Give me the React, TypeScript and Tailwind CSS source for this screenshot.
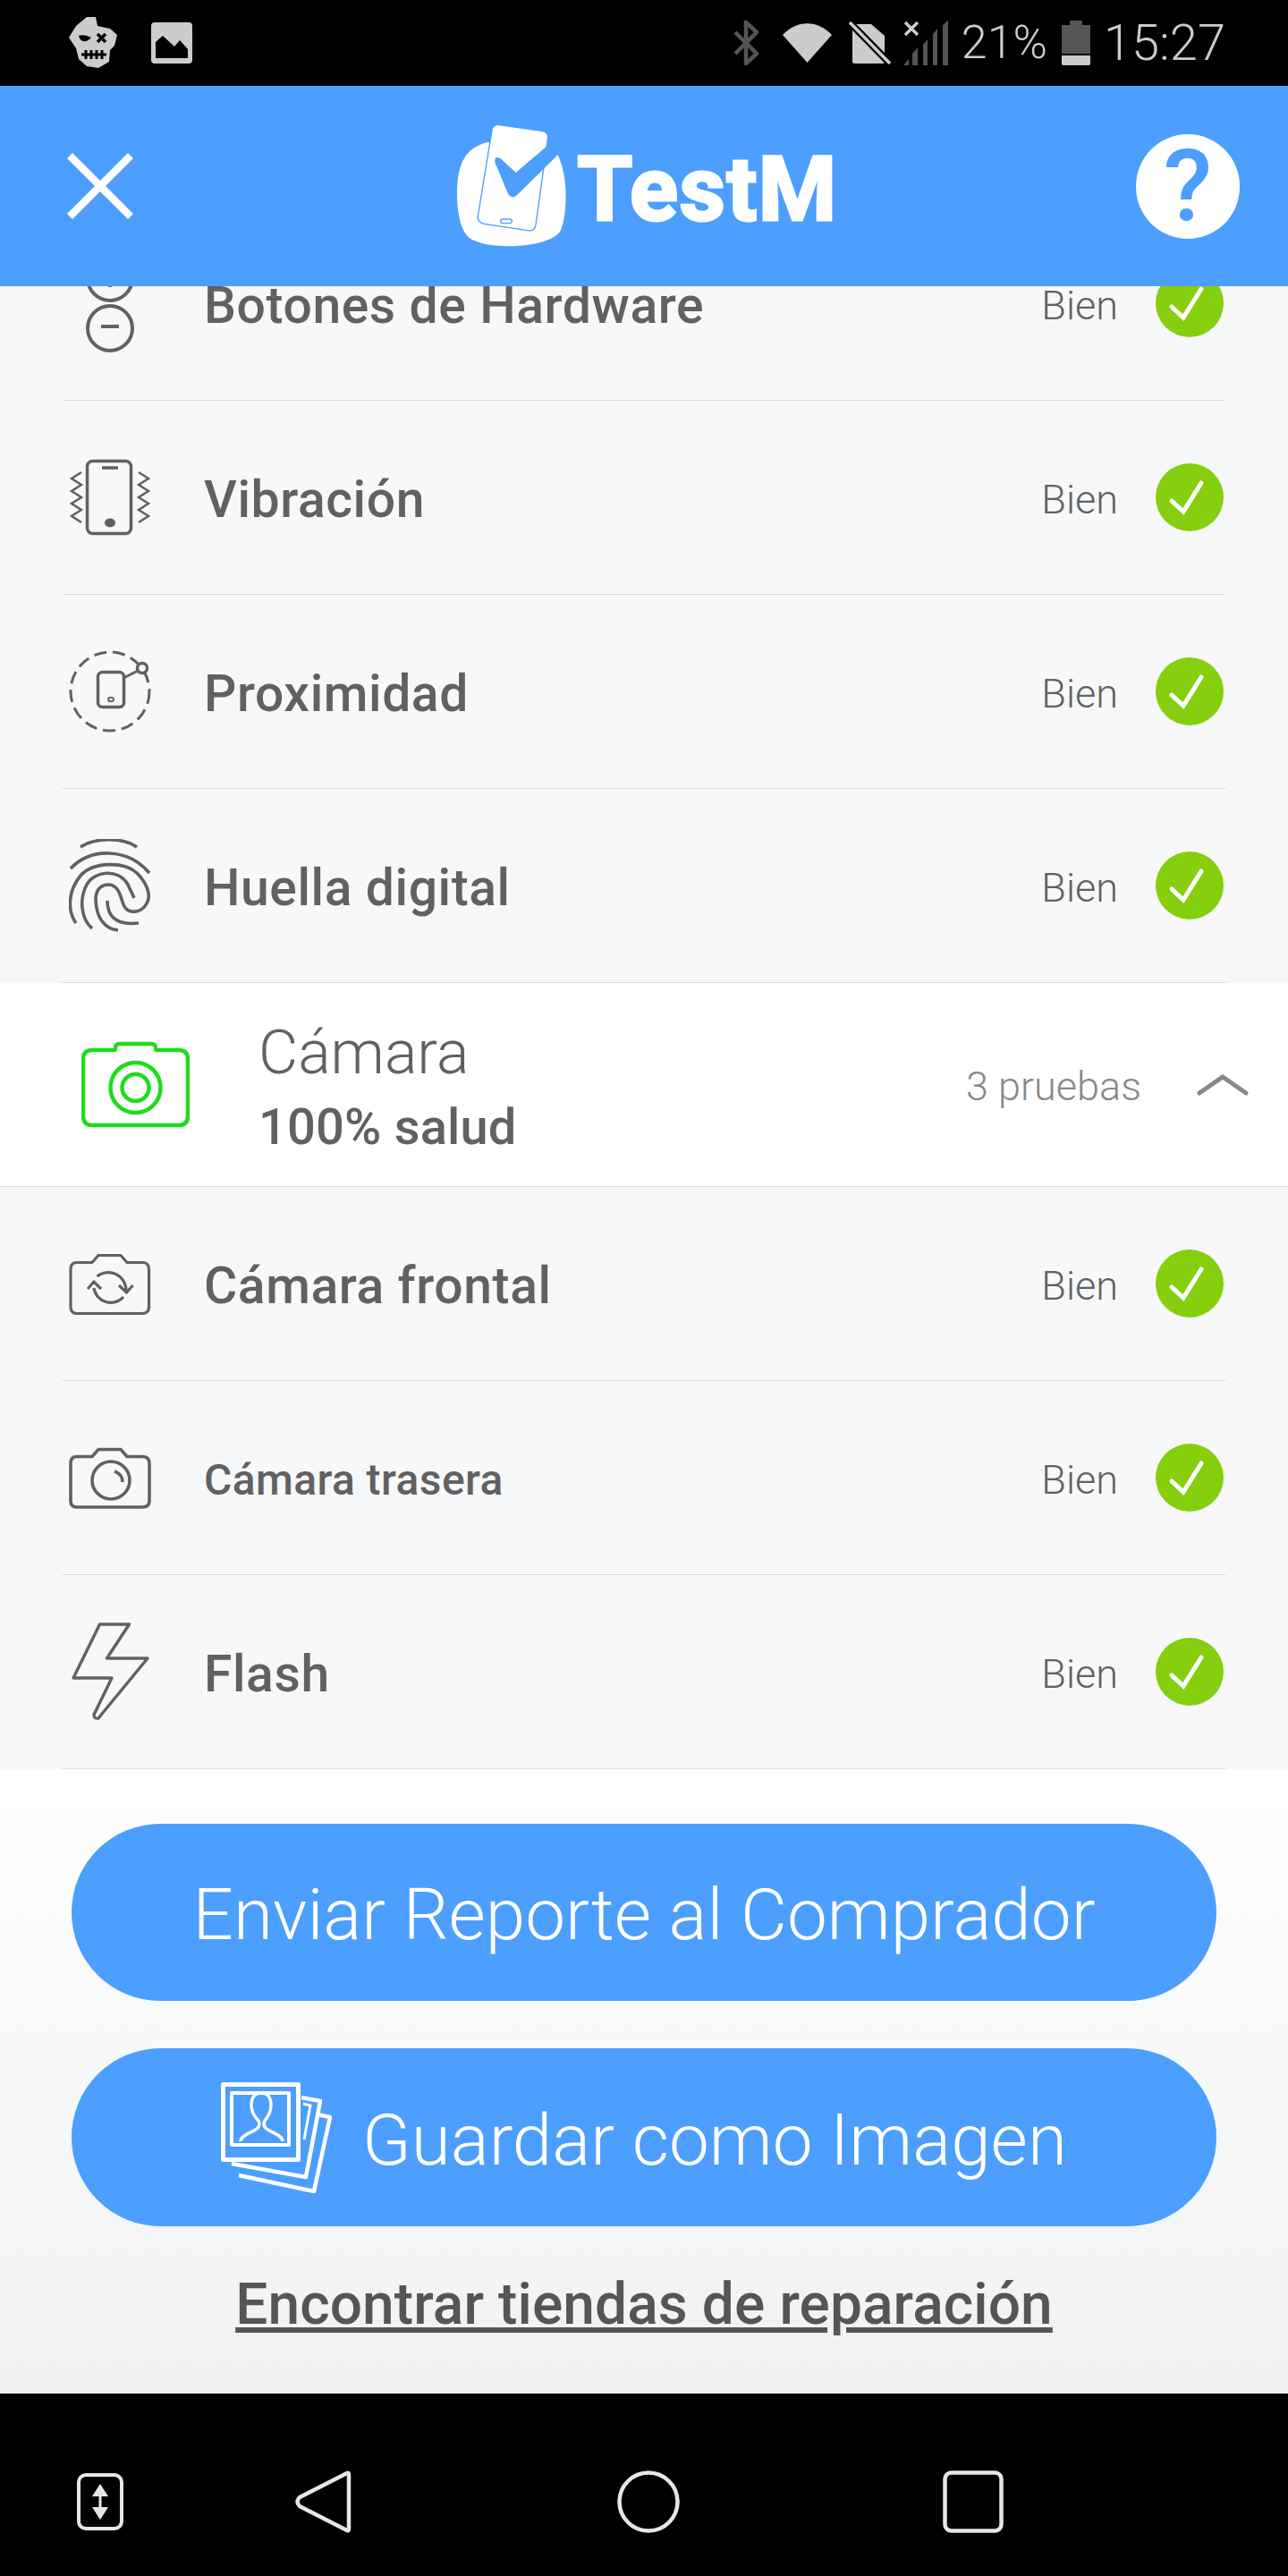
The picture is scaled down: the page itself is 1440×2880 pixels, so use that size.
import React from 'react';

const GRAY = '#616161';

const HardwareIcon = () => (
  <svg width="92" height="110" viewBox="0 0 92 110" fill="none" stroke={GRAY} strokeWidth="4">
    <circle cx="46" cy="27" r="25" />
    <path d="M36 27h20M46 17v20" />
    <circle cx="46" cy="83" r="25" />
    <path d="M36 81h20" />
  </svg>
);

const VibrationIcon = () => (
  <svg width="92" height="92" viewBox="0 0 92 92" fill="none" stroke={GRAY} strokeWidth="3.5">
    <rect x="20.5" y="5.5" width="49" height="81" rx="6" />
    <path d="M37 13h18" />
    <ellipse cx="46" cy="74.5" rx="6" ry="5" fill={GRAY} stroke="none" />
    <path d="M14 18 3 25l11 7-11 7 11 7-11 7 11 7-11 7 11 7" strokeWidth="2.5" />
    <path d="M78 18l11 7-11 7 11 7-11 7 11 7-11 7 11 7-11 7" strokeWidth="2.5" />
  </svg>
);

const ProximityIcon = () => (
  <svg width="92" height="92" viewBox="0 0 92 92" fill="none" stroke={GRAY} strokeWidth="3">
    <circle cx="46" cy="46" r="44" strokeDasharray="14 7" />
    <rect x="32.5" y="24.5" width="29" height="39" rx="5" strokeWidth="3.5" />
    <ellipse cx="47" cy="55" rx="3" ry="2.2" strokeWidth="2" />
    <path d="M61 31l16-8" />
    <circle cx="82" cy="20" r="5.5" fill="#f7f8fa" strokeWidth="3.5" />
  </svg>
);

const FingerprintIcon = () => (
  <svg width="92" height="104" viewBox="0 0 92 104" fill="none" stroke={GRAY} strokeWidth="3.6">
    <path d="M13 9C30-2 60-2 76 9" />
    <path d="M2 33C25 9 66 10 90 38" />
    <path d="M8 94C-2 80-1 58 13 41 27 25 62 25 76 38 86 48 93 62 87 72 82 82 69 84 63 77" />
    <path d="M26 100C14 90 11 68 20 51 28 36 55 32 66 51L73 66" />
    <path d="M55 102C42 101 30 90 30 66 31 55 37 51 45 51 58 52 58 70 63 77" />
    <path d="M78 94C60 96 43 92 43 69" />
  </svg>
);

const FrontCameraIcon = () => (
  <svg width="92" height="70" viewBox="0 0 92 70" fill="none" stroke={GRAY} strokeWidth="3.2">
    <path d="M9 11.5H26L33 3.5H58L65 11.5H82Q89.5 11.5 89.5 19V61Q89.5 68.5 82 68.5H9Q2 68.5 2 61V19Q2 11.5 9 11.5Z" />
    <path d="M31.5 27A20 20 0 0 1 64 43M28 40A19 19 0 0 0 61 50" />
    <path d="M21 41l7-8 8 8M56 37l8.5 8 7-8" />
  </svg>
);

const RearCameraIcon = () => (
  <svg width="92" height="70" viewBox="0 0 92 70" fill="none" stroke={GRAY} strokeWidth="3.6">
    <path d="M9 11.5H26L33 3.5H58L65 11.5H82Q90 11.5 90 19V61Q90 68 82 68H9Q2 68 2 61V19Q2 11.5 9 11.5Z" />
    <circle cx="47" cy="38" r="21" />
    <path d="M51 28q9 3 9 12" />
  </svg>
);

const FlashIcon = () => (
  <svg width="92" height="110" viewBox="0 0 92 110" fill="none" stroke={GRAY} strokeWidth="3.4" strokeLinejoin="round">
    <path d="M67.5 2H34.5L5 62H48L28 103Q28 108 33 107L88 40H42.5Z" />
  </svg>
);

const CheckBadge = () => (
  <div className="h-[76px] w-[76px] shrink-0 rounded-full bg-[#85cf0e]">
    <svg width="76" height="76" viewBox="0 0 76 76" fill="none" stroke="#ffffff" strokeWidth="5" strokeLinecap="round">
      <path d="M18 42 31 54 51 22" />
    </svg>
  </div>
);

interface TestRowProps {
  label: string;
  icon: React.ReactNode;
  small?: boolean;
  first?: boolean;
}

const TestRow: React.FC<TestRowProps> = ({ label, icon, small = false, first = false }) => (
  <div className={`mx-[70px] flex h-[217px] shrink-0 items-center border-b border-[#d9dadc] ${first ? '-mt-[89px]' : ''}`}>
    <div className="ml-[7px] flex w-[92px] shrink-0 justify-center">{icon}</div>
    <span
      className={`ml-[59px] pt-[6px] font-medium text-[#616161] ${
        small ? 'text-[48px] tracking-[0.4px]' : 'text-[57px] tracking-[0.6px]'
      }`}
    >
      {label}
    </span>
    <span className="mr-[42px] ml-auto pt-[6px] text-[45px] font-light text-[#616161]">Bien</span>
    <div className="mr-[2px]">
      <CheckBadge />
    </div>
  </div>
);

const StatusBar = () => (
  <div className="flex h-[96px] shrink-0 items-center bg-black pl-[76px] text-[#cccccc]">
    <svg width="55" height="57" viewBox="0 0 55 57" className="-mt-[2px]">
      <path d="M21 0H31L33 10 47 13 55 20 52 32 47 37 46 50 34 57 21 55 12 47 9 35 1 23 9 10Z" fill="#cccccc" />
      <path d="M12 21Q19 19 26 23 22 28 17 27 13 26 12 21Z" fill="#000000" />
      <path d="M33 19l9 9M42 19l-9 9" stroke="#000000" strokeWidth="3.5" fill="none" />
      <path d="M15 42H43M20 37V47M26 37V47M32 37V47M38 37V47" stroke="#000000" strokeWidth="3" fill="none" />
    </svg>
    <svg width="46" height="46" viewBox="0 0 46 46" className="ml-[38px]">
      <rect width="46" height="46" rx="4" fill="#cccccc" />
      <path d="M5 40V22L13 15 26 27 32 20 41 30V40Z" fill="#000000" />
    </svg>
    <div className="ml-auto flex items-center pr-[70px]">
      <svg width="28" height="50" viewBox="0 0 28 50" fill="none" stroke="#555555" strokeWidth="4.5">
        <path d="M2 13 26 37 14 48V2l12 11L2 37" />
      </svg>
      <svg width="55" height="44" viewBox="0 0 55 44" className="ml-[27px]">
        <path d="M0 13C16-4 39-4 55 13L27.5 44z" fill="#cccccc" />
      </svg>
      <svg width="47" height="48" viewBox="0 0 47 48" className="ml-[19px]">
        <path d="M4 3h21l15 13v29q0 2-2 2H6q-2 0-2-2z" fill="#cccccc" />
        <path d="M0 0 45 46" stroke="#000000" strokeWidth="8" />
        <path d="M1 1 46 47" stroke="#cccccc" strokeWidth="3.5" />
      </svg>
      <svg width="50" height="50" viewBox="0 0 50 50" className="ml-[14px]">
        <path d="M0 50l6-7v7zM10 50V37l6-7v20zM22 50V27l5-6v29zM33 50V15l5-6v41zM44 50V5l6-5v50z" fill="#555555" />
        <path d="M2 2l14 14M16 2 2 16" stroke="#cccccc" strokeWidth="3.5" />
      </svg>
      <span className="ml-[15px] text-[52px] leading-none font-light">21%</span>
      <svg width="32" height="50" viewBox="0 0 32 50" className="ml-[16px]">
        <path d="M9 0h14v5h9v32H0V5h9z" fill="#555555" />
        <path d="M0 39h32v9q0 2-2 2H2q-2 0-2-2z" fill="#cccccc" />
      </svg>
      <span className="ml-[15px] text-[56px] leading-none font-light">15:27</span>
    </div>
  </div>
);

const TestMLogo = () => (
  <div className="ml-[28px] flex items-center">
    <svg width="125" height="140" viewBox="85 85 375 420">
      <path
        d="M190 148C120 165 88 215 88 320 88 400 105 450 130 470 170 495 240 500 300 495 370 490 420 470 435 445 455 400 455 320 450 280 445 240 435 210 425 188Z"
        fill="#ffffff"
      />
      <path
        d="M228 90 372 110Q396 114 392 138L352 425Q348 448 325 444L180 422Q155 417 158 395L205 108Q208 88 228 90Z"
        fill="#ffffff"
        stroke="#4c9eff"
        strokeWidth="4"
      />
      <path
        d="M232 205 285 254 392 163 426 186 285 325Q272 335 262 320L218 215Q216 195 232 205Z"
        fill="#4c9eff"
        stroke="#4c9eff"
        strokeWidth="6"
        strokeLinejoin="round"
      />
      <rect x="234" y="406" width="38" height="14" rx="7" fill="none" stroke="#4c9eff" strokeWidth="4" />
    </svg>
    <span className="ml-[10px] pt-[8px] text-[100px] leading-none font-bold tracking-[1.5px] text-white [-webkit-text-stroke:3px_white]">
      TestM
    </span>
  </div>
);

const Header = () => (
  <div className="z-10 flex h-[224px] shrink-0 items-center justify-between bg-[#4c9eff] pr-[54px] pl-[75px]">
    <svg width="74" height="74" viewBox="0 0 74 74" stroke="#ffffff" strokeWidth="8.5">
      <path d="M3 3 71 71M71 3 3 71" />
    </svg>
    <TestMLogo />
    <div className="flex h-[117px] w-[116px] items-center justify-center rounded-full bg-white text-[112px] leading-none font-medium text-[#4c9eff]">
      ?
    </div>
  </div>
);

const GreenCamera = () => (
  <svg width="121" height="97" viewBox="0 0 121 97" fill="none" stroke="#1fdc1a" strokeWidth="4.5">
    <path d="M12 10h24q2 0 2-2 0-5 5-5h35q5 0 5 5 0 2 2 2h24q10 0 10 10v64q0 10-10 10H12q-10 0-10-10V20q0-10 10-10z" />
    <circle cx="60.5" cy="52" r="28" />
    <circle cx="60.5" cy="52" r="15" />
  </svg>
);

const PhotosIcon = () => (
  <svg width="124" height="124" viewBox="0 0 124 124" fill="none" stroke="#ffffff" strokeLinejoin="round">
    <rect x="2.5" y="2.5" width="84" height="84" strokeWidth="5" />
    <rect x="12" y="12" width="64" height="58" strokeWidth="4" />
    <path
      d="M22 66C22 58 38 56 42 50 43 48 43 44 42 43 37 38 34 33 34 26 34 16 39 12 45 12 51 12 56 16 56 26 56 33 53 38 49 43 48 45 48 48 49 50 53 56 69 58 69 66"
      strokeWidth="3.5"
    />
    <path d="M90 17 111 21 95 106 12 91" strokeWidth="4.5" />
    <path d="M92 24 100 26 93 64" strokeWidth="3" />
    <path d="M108 36 122 39 104 122 20 104" strokeWidth="4.5" />
  </svg>
);

const BottomActions = () => (
  <div className="flex flex-1 flex-col items-center bg-linear-to-b from-white to-[#eff1f3] pt-[61px]">
    <button className="flex h-[198px] w-[1280px] items-center justify-center rounded-full bg-[#4c9eff] pt-[5px] text-[80px] font-light text-white">
      Enviar Reporte al Comprador
    </button>
    <button className="mt-[53px] flex h-[199px] w-[1280px] items-center justify-center rounded-full bg-[#4c9eff] text-[80px] font-light text-white">
      <PhotosIcon />
      <span className="ml-[34px] pt-[6px]">Guardar como Imagen</span>
    </button>
    <a className="mt-[48px] text-[64px] leading-[80px] font-medium tracking-[0.1px] text-[#555555] underline">
      Encontrar tiendas de reparación
    </a>
  </div>
);

const NavBar = () => (
  <div className="flex h-[204px] shrink-0 items-center bg-black pt-[38px] pl-[86px]">
    <svg width="52" height="64" viewBox="0 0 52 64" fill="none" stroke="#e6e6e6" strokeWidth="4">
      <rect x="2" y="2" width="48" height="60" rx="8" />
      <path d="M26 14V50" strokeWidth="3" />
      <path d="M26 12 17 26H35ZM26 52 17 38H35Z" fill="#e6e6e6" stroke="none" />
    </svg>
    <svg width="64" height="70" viewBox="0 0 64 70" fill="none" stroke="#e6e6e6" strokeWidth="4.5" className="ml-[192px]">
      <path d="M60 5Q60 1 56 4L5 30Q0 35 5 40L56 66Q60 69 60 65Z" strokeLinejoin="round" />
    </svg>
    <svg width="70" height="70" viewBox="0 0 70 70" fill="none" stroke="#e6e6e6" strokeWidth="4.5" className="ml-[296px]">
      <circle cx="35" cy="35" r="32.5" />
    </svg>
    <svg width="68" height="70" viewBox="0 0 68 70" fill="none" stroke="#e6e6e6" strokeWidth="4.5" className="ml-[294px]">
      <rect x="2.5" y="2.5" width="63" height="65" rx="7" />
    </svg>
  </div>
);

export default function App() {
  return (
    <div className="flex h-[2880px] w-[1440px] flex-col overflow-hidden bg-white [font-family:Roboto,sans-serif]">
      <StatusBar />
      <Header />
      <div className="flex shrink-0 flex-col bg-[#f7f8fa]">
        <TestRow first label="Botones de Hardware" icon={<HardwareIcon />} />
        <TestRow label="Vibración" icon={<VibrationIcon />} />
        <TestRow label="Proximidad" icon={<ProximityIcon />} />
        <TestRow label="Huella digital" icon={<FingerprintIcon />} />
        <div className="flex h-[228px] items-center border-b border-[#d9dadc] bg-white pr-[44px] pl-[91px]">
          <GreenCamera />
          <div className="ml-[77px] flex flex-col pt-[7px]">
            <span className="text-[68px] leading-[80px] font-light text-[#616161]">Cámara</span>
            <span className="mt-[7px] text-[56px] leading-[72px] font-medium tracking-[0.2px] text-[#616161]">100% salud</span>
          </div>
          <span className="mr-[62px] ml-auto pt-[5px] text-[45px] font-light text-[#888888]">3 pruebas</span>
          <svg width="58" height="24" viewBox="0 0 58 24" fill="none" stroke="#888888" strokeWidth="5" strokeLinecap="round">
            <path d="M3 21 29 3l26 18" />
          </svg>
        </div>
        <TestRow label="Cámara frontal" icon={<FrontCameraIcon />} />
        <TestRow small label="Cámara trasera" icon={<RearCameraIcon />} />
        <TestRow label="Flash" icon={<FlashIcon />} />
      </div>
      <BottomActions />
      <NavBar />
    </div>
  );
}
